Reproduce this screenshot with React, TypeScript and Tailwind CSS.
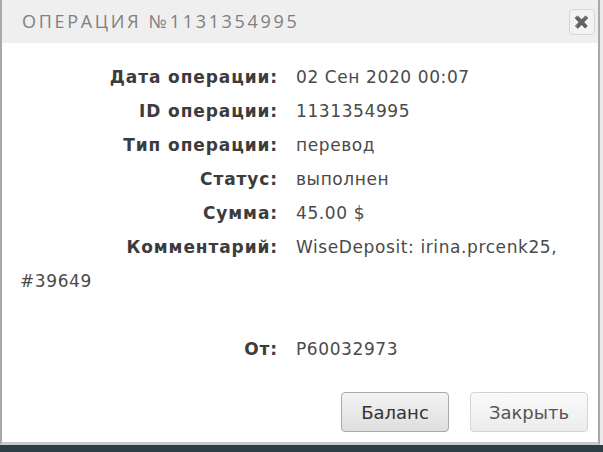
export default function App() {
  const rows: [string, string][] = [
    ["Дата операции:", "02 Сен 2020 00:07"],
    ["ID операции:", "1131354995"],
    ["Тип операции:", "перевод"],
    ["Статус:", "выполнен"],
    ["Сумма:", "45.00 $"],
  ];

  return (
    <div className="flex h-[452px] w-[603px] flex-col overflow-hidden bg-[#2f3e46]">
      <div className="flex h-[445px] bg-[#e9e9e9]">
        <div className="flex w-[600px] flex-col border-x-2 border-b-[3px] border-x-[#a9a9a9] border-b-[#c9c9c9] bg-white">
          <div className="flex h-[43px] items-center justify-between bg-[#efefef] pl-[20px] pr-[3px]">
            <h1 className="font-['Open_Sans',sans-serif] text-[18px] tracking-[2.7px] text-[#808080]">
              ОПЕРАЦИЯ №1131354995
            </h1>
            <button className="flex h-[26px] w-[26px] items-center justify-center rounded-[4px] border border-[#d6d6d6] bg-[#f3f3f3] text-[12px] text-[#8a8a8a]">
              ✖
            </button>
          </div>
          <div className="flex flex-1 flex-col pt-[17px] pl-[18px] pr-[20px] font-['DejaVu_Sans',sans-serif] text-[17px] leading-[34px]">
            {rows.map(([label, value]) => (
              <div key={label}>
                <span className="inline-block w-[258px] text-right font-bold tracking-[0.9px] text-[#3c3c3c]">{label}</span>
                <span className="ml-[18px] tracking-[0.6px] text-[#4a4a4a]">{value}</span>
              </div>
            ))}
            <div>
              <span className="inline-block w-[258px] text-right font-bold tracking-[0.9px] text-[#3c3c3c]">Комментарий:</span>
              <span className="ml-[18px] tracking-[0.6px] text-[#4a4a4a]">WiseDeposit: irina.prcenk25, #39649</span>
            </div>
            <div className="mt-[34px]">
              <span className="inline-block w-[258px] text-right font-bold tracking-[0.9px] text-[#3c3c3c]">От:</span>
              <span className="ml-[18px] tracking-[0.6px] text-[#4a4a4a]">P60032973</span>
            </div>
          </div>
          <div className="mb-[10px] flex justify-end gap-[21px] pr-[10px] font-['DejaVu_Sans',sans-serif] text-[18px]">
            <button className="h-[40px] w-[108px] rounded-[4px] border border-[#a8a8a8] bg-gradient-to-b from-[#f4f4f4] to-[#dedede] text-[#333]">
              Баланс
            </button>
            <button className="h-[40px] w-[118px] rounded-[4px] border border-[#d4d4d4] bg-gradient-to-b from-[#fafafa] to-[#ececec] text-[#555]">
              Закрыть
            </button>
          </div>
        </div>
      </div>
    </div>
  );
}
